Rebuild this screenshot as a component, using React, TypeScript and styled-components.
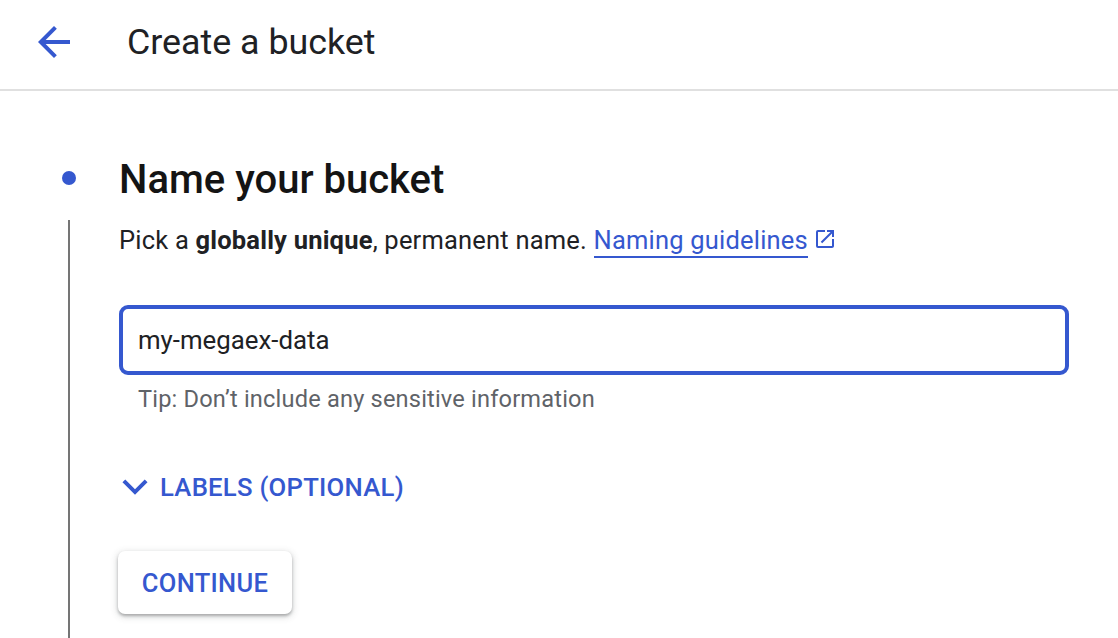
import React from "react";
import styled, { createGlobalStyle } from "styled-components";

const GlobalStyle = createGlobalStyle`
  html, body { margin: 0; padding: 0; background: #ffffff; }
  body { font-family: Roboto, "Noto Sans", Arial, sans-serif; color: #202124; -webkit-font-smoothing: antialiased; }
  * { box-sizing: border-box; }
`;

const BLUE = "#3558cf";

const Page = styled.div`
  width: 1118px;
  height: 638px;
  overflow: hidden;
  display: flex;
  flex-direction: column;
`;

const Header = styled.header`
  height: 91px;
  flex: none;
  display: flex;
  align-items: center;
  padding-left: 30px;
  border-bottom: 2px solid #e0e0e0;
  padding-bottom: 5px;
`;

const BackButton = styled.button`
  width: 48px;
  height: 48px;
  padding: 0;
  border: none;
  background: transparent;
  display: flex;
  align-items: center;
  justify-content: center;
  cursor: pointer;
  margin-right: 49px;
`;

const Title = styled.h1`
  margin: 0;
  font-size: 35.8px;
  font-weight: 400;
  color: #202124;
  letter-spacing: 0;
`;

const Main = styled.main`
  flex: 1;
  display: grid;
  grid-template-columns: 119px 950px;
  padding-top: 66px;
`;

const Rail = styled.div`
  display: flex;
  flex-direction: column;
  align-items: center;
  padding-left: 18px;
`;

const Dot = styled.span`
  width: 14px;
  height: 14px;
  border-radius: 50%;
  background: ${BLUE};
  margin-top: 14px;
  flex: none;
`;

const Line = styled.span`
  width: 2px;
  flex: 1;
  background: #757575;
  margin-top: 35px;
`;

const Content = styled.section`
  display: flex;
  flex-direction: column;
  align-items: flex-start;
`;

const Heading = styled.h2`
  margin: 0;
  font-size: 40px;
  line-height: 46px;
  font-weight: 500;
  color: #141414;
`;

const Lead = styled.p`
  margin: 21px 0 0;
  font-size: 25.5px;
  line-height: 32px;
  letter-spacing: 0.2px;
  color: #202124;
  white-space: nowrap;
  b { font-weight: 700; }
`;

const Link = styled.a`
  color: ${BLUE};
  text-decoration: none;
  border-bottom: 2px solid ${BLUE};
  padding-bottom: 1px;
`;

const ExtIcon = styled.svg`
  vertical-align: -2px;
  margin-left: 5px;
`;

const Field = styled.input`
  margin-top: 49px;
  width: 950px;
  height: 70px;
  border: 4px solid ${BLUE};
  border-radius: 9px;
  padding: 0 15px;
  font-family: Roboto, "Noto Sans", Arial, sans-serif;
  font-size: 25.8px;
  color: #202124;
  outline: none;
  background: #fff;
`;

const Hint = styled.div`
  margin: 10px 0 0 19px;
  font-size: 23.6px;
  line-height: 28px;
  letter-spacing: 0.18px;
  color: #5f6368;
`;

const Expander = styled.button`
  margin-top: 58px;
  padding: 0;
  border: none;
  background: transparent;
  display: flex;
  align-items: center;
  gap: 9px;
  font-family: Roboto, "Noto Sans", Arial, sans-serif;
  font-size: 25.7px;
  line-height: 32px;
  font-weight: 500;
  color: ${BLUE};
  letter-spacing: 0.25px;
  cursor: pointer;
`;

const Continue = styled.button`
  margin-top: 48px;
  margin-left: -1px;
  width: 174px;
  height: 63px;
  border: none;
  border-radius: 7px;
  background: #fff;
  box-shadow: 0 2px 3px rgba(60, 64, 67, 0.35), 0 2px 7px 1px rgba(60, 64, 67, 0.18);
  font-family: Roboto, "Noto Sans", Arial, sans-serif;
  font-size: 25.5px;
  font-weight: 500;
  color: ${BLUE};
  letter-spacing: 0.3px;
  cursor: pointer;
`;

export default function App() {
  return (
    <Page>
      <GlobalStyle />
      <Header>
        <BackButton aria-label="Back">
          <svg width="48" height="48" viewBox="0 0 24 24">
            <path d="M20 11H7.83l5.59-5.59L12 4l-8 8 8 8 1.41-1.41L7.83 13H20v-2z" fill={BLUE} />
          </svg>
        </BackButton>
        <Title>Create a bucket</Title>
      </Header>
      <Main>
        <Rail>
          <Dot />
          <Line />
        </Rail>
        <Content>
          <Heading>Name your bucket</Heading>
          <Lead>
            Pick a <b>globally unique</b>, permanent name. <Link href="#">Naming guidelines</Link>
            <ExtIcon width="24" height="24" viewBox="0 0 24 24">
              <path
                d="M19 19H5V5h7V3H5a2 2 0 0 0-2 2v14a2 2 0 0 0 2 2h14c1.1 0 2-.9 2-2v-7h-2v7zM14 3v2h3.59l-9.83 9.83 1.41 1.41L19 6.41V10h2V3h-7z"
                fill={BLUE}
              />
            </ExtIcon>
          </Lead>
          <Field value="my-megaex-data" readOnly />
          <Hint>Tip: Don’t include any sensitive information</Hint>
          <Expander>
            <svg width="32" height="32" viewBox="0 0 24 24">
              <path d="M2.6 8.5 12 17.9l9.4-9.4-2.1-2.1-7.3 7.3-7.3-7.3z" fill={BLUE} />
            </svg>
            LABELS (OPTIONAL)
          </Expander>
          <Continue>CONTINUE</Continue>
        </Content>
      </Main>
    </Page>
  );
}
